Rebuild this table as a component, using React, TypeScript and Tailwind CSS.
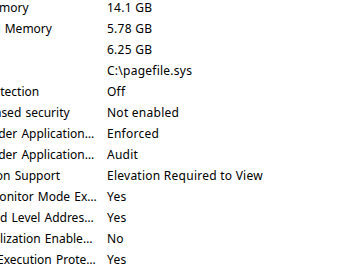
import React from "react";

const rows: [string, string][] = [
  ["Total Virtual Memory", "14.1 GB"],
  ["Available Virtual Memory", "5.78 GB"],
  ["Page File Space", "6.25 GB"],
  ["Page File", "C:\\pagefile.sys"],
  ["Kernel DMA Protection", "Off"],
  ["Virtualization-based security", "Not enabled"],
  ["Windows Defender Application Control policy", "Enforced"],
  ["Windows Defender Application Control user mode policy", "Audit"],
  ["Device Encryption Support", "Elevation Required to View"],
  ["Hyper-V - VM Monitor Mode Extensions", "Yes"],
  ["Hyper-V - Second Level Address Translation Extensions", "Yes"],
  ["Hyper-V - Virtualization Enabled in Firmware", "No"],
  ["Hyper-V - Data Execution Protection", "Yes"],
];

export default function App() {
  return (
    <div className="w-[364px] h-[273px] overflow-hidden bg-white text-black font-['Noto_Sans',sans-serif] text-[12px]">
      <div className="-ml-[91px] -mt-[3px] flex flex-col">
        {rows.map(([name, value]) => (
          <div key={name} className="flex h-[21px] leading-[21px] whitespace-nowrap">
            <div className="w-[198px] shrink-0 pr-[10px]">
              <div className="overflow-hidden text-ellipsis [word-spacing:1px]">{name}</div>
            </div>
            <div className="shrink-0 tracking-[0.25px]">{value}</div>
          </div>
        ))}
      </div>
    </div>
  );
}
